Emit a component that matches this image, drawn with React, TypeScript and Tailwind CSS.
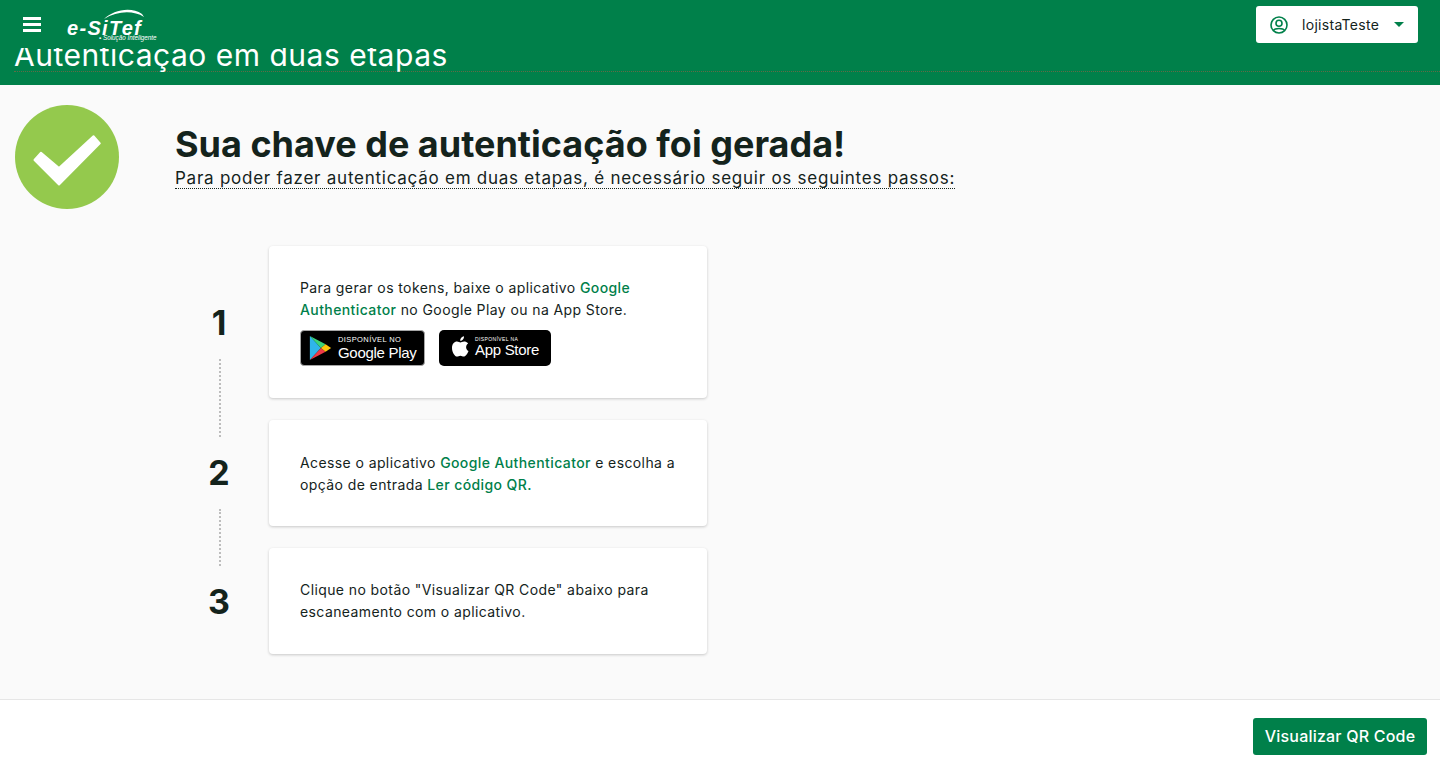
import React from 'react';

const font = "font-['Inter','Liberation_Sans',sans-serif]";

function Logo() {
  return (
    <div className="relative ml-[26px] h-[38px] w-[92px] shrink-0">
      <svg className="absolute left-[36px] top-[8px]" width="44" height="14" viewBox="0 0 44 14" fill="none">
        <path d="M1 11 C 10 2, 28 -2, 39 6 L 41 9 C 30 2, 14 3, 1 11 Z" fill="#fff" />
      </svg>
      <span className="absolute left-0 top-[15px] font-['Liberation_Sans',sans-serif] text-[20px] font-bold italic leading-[26px] tracking-[1.3px] text-white">
        e-SiTef
      </span>
      <span className="absolute left-[32px] top-[34px] whitespace-nowrap font-['Liberation_Sans',sans-serif] text-[6.3px] italic leading-[8px] text-white">
        ▪ Solução Inteligente
      </span>
    </div>
  );
}

function UserIcon() {
  return (
    <svg width="18" height="18" viewBox="0 0 18 18" fill="none" stroke="#00804a" strokeWidth="1.6">
      <circle cx="9" cy="9" r="8" />
      <circle cx="9" cy="7.2" r="3" />
      <path d="M3.6 14.4 C 5 11.8, 13 11.8, 14.4 14.4" />
    </svg>
  );
}

function GoogleBadge() {
  return (
    <div className="relative flex h-[36px] w-[125px] items-center rounded-[4px] border border-[#a6a6a6] bg-black pl-[8px]">
      <svg width="23" height="24" viewBox="0 0 23 26">
        <path d="M0 0 L12 13 L0 26 Z" fill="#2fb5ea" />
        <path d="M0 0 L17 9 L12 13 Z" fill="#3bd47b" />
        <path d="M0 26 L17 17 L12 13 Z" fill="#ee3a47" />
        <path d="M17 9 L23 13 L17 17 L12 13 Z" fill="#fdc60c" />
      </svg>
      <div className="ml-[6px] flex flex-col pt-[1px] font-['Liberation_Sans',sans-serif] text-white">
        <span className="text-[7.5px] leading-[8px]">DISPONÍVEL NO</span>
        <span className="text-[15px] leading-[17px] tracking-[-0.3px]">Google Play</span>
      </div>
    </div>
  );
}

function AppleBadge() {
  return (
    <div className="ml-[14px] flex h-[36px] w-[112px] items-center rounded-[5px] bg-black pl-[13px]">
      <svg className="mb-[3px]" width="17" height="21" viewBox="0 0 17 21" fill="#fff">
        <path d="M12 0.2 C 12.2 2.6 10.2 4.8 8.2 4.7 C 7.9 2.6 10 0.4 12 0.2 Z" />
        <path d="M16.5 15 C 15.5 17.6 13.6 20.6 11.8 20.6 C 10.4 20.6 10 19.8 8.4 19.8 C 6.8 19.8 6.3 20.6 5 20.6 C 3 20.6 0 16.6 0 12 C 0 8 2.4 5.6 5 5.6 C 6.4 5.6 7.6 6.5 8.4 6.5 C 9.2 6.5 10.6 5.4 12.4 5.5 C 13.2 5.5 15 5.9 16.1 7.5 C 13.2 9.4 13.6 13.8 16.5 15 Z" />
      </svg>
      <div className="ml-[6px] flex flex-col pb-[3px] font-['Liberation_Sans',sans-serif] text-white">
        <span className="text-[5px] leading-[6px]">DISPONÍVEL NA</span>
        <span className="text-[15px] leading-[16px] tracking-[-0.3px]">App Store</span>
      </div>
    </div>
  );
}

function Link({ children }: { children: React.ReactNode }) {
  return <span className="font-medium text-[#00804a]">{children}</span>;
}

function StepCard({ className, children }: { className: string; children: React.ReactNode }) {
  return (
    <div className={`w-[438px] rounded-[4px] bg-white px-[31px] text-[14px] leading-[22px] tracking-[0.4px] text-[#14231c] shadow-[0_1px_3px_rgba(0,0,0,0.2)] ${className}`}>
      {children}
    </div>
  );
}

function Dots({ className }: { className: string }) {
  return <div className={`ml-[20px] w-0 border-l-2 border-dotted border-[#bdbdbd] ${className}`} />;
}

export default function App() {
  return (
    <div className={`flex h-[772px] flex-col overflow-hidden bg-white ${font}`}>
      <header className="h-[85px] shrink-0 bg-[#00804a]">
        <div className="relative z-10 flex h-[48px] items-start bg-[#00804a] pl-[23px] pr-[22px]">
          <svg className="mt-[17px]" width="18" height="15" viewBox="0 0 18 15" fill="#fff">
            <rect width="18" height="3" />
            <rect y="6" width="18" height="3" />
            <rect y="12" width="18" height="3" />
          </svg>
          <Logo />
          <div className="ml-auto mt-[6px] flex h-[37px] w-[162px] items-center rounded-[3px] bg-white pl-[14px] text-[14px] tracking-[0.3px] text-[#14231c]">
            <UserIcon />
            <span className="ml-[14px]">lojistaTeste</span>
            <span className="ml-[15px] h-0 w-0 border-x-[5.5px] border-t-[5px] border-x-transparent border-t-[#00804a]" />
          </div>
        </div>
        <div className="-mt-[11px] ml-[14px] h-[35px] border-b border-dotted border-[#5f6b45]">
          <h1 className="text-[30px] leading-[36px] tracking-[0.5px] text-white">Autenticação em duas etapas</h1>
        </div>
      </header>

      <main className="flex h-[614px] shrink-0 flex-col bg-[#fafafa]">
        <div className="flex pl-[15px] pt-[20px]">
          <svg className="shrink-0" width="104" height="104" viewBox="0 0 104 104">
            <circle cx="52" cy="52" r="52" fill="#94c94d" />
            <path
              d="M19.5 55 L26 47.7 L44 63 L78.5 31.2 L84.8 38.3 L44 79.5 Z"
              fill="#fff"
              stroke="#fff"
              strokeWidth="2"
              strokeLinejoin="round"
            />
          </svg>
          <div className="ml-[56px] pt-[18px]">
            <h2 className="text-[36px] font-bold leading-[42px] text-[#14231c]">Sua chave de autenticação foi gerada!</h2>
            <p className="mt-[3px] border-b border-dotted border-[#14231c] text-[17px] leading-[20px] tracking-[0.75px] text-[#14231c]">
              Para poder fazer autenticação em duas etapas, é necessário seguir os seguintes passos:
            </p>
          </div>
        </div>

        <div className="ml-[199px] mt-[37px] flex">
          <div className="w-[40px] text-center text-[34px] font-bold leading-[40px] text-[#14231c]">
            <div className="mt-[57px]">1</div>
            <Dots className="mt-[16px] h-[78px]" />
            <div className="mt-[16px]">2</div>
            <Dots className="mt-[16px] h-[57px]" />
            <div className="mt-[16px]">3</div>
          </div>
          <div className="ml-[30px] flex flex-col gap-[22px]">
            <StepCard className="h-[152px] pt-[31px]">
              <p>
                Para gerar os tokens, baixe o aplicativo <Link>Google Authenticator</Link> no Google Play ou na App Store.
              </p>
              <div className="mt-[9px] flex">
                <GoogleBadge />
                <AppleBadge />
              </div>
            </StepCard>
            <StepCard className="h-[106px] pt-[32px]">
              <p>
                Acesse o aplicativo <Link>Google Authenticator</Link> e escolha a opção de entrada <Link>Ler código QR.</Link>
              </p>
            </StepCard>
            <StepCard className="h-[106px] pt-[31px]">
              <p>Clique no botão "Visualizar QR Code" abaixo para escaneamento com o aplicativo.</p>
            </StepCard>
          </div>
        </div>
      </main>

      <footer className="flex flex-1 items-start justify-end border-t border-[#e6e6e6] bg-white pr-[13px] pt-[18px]">
        <button className="h-[37px] w-[174px] rounded-[3px] bg-[#00804a] pb-[1px] text-[16px] font-medium tracking-[0.2px] text-white">
          Visualizar QR Code
        </button>
      </footer>
    </div>
  );
}
